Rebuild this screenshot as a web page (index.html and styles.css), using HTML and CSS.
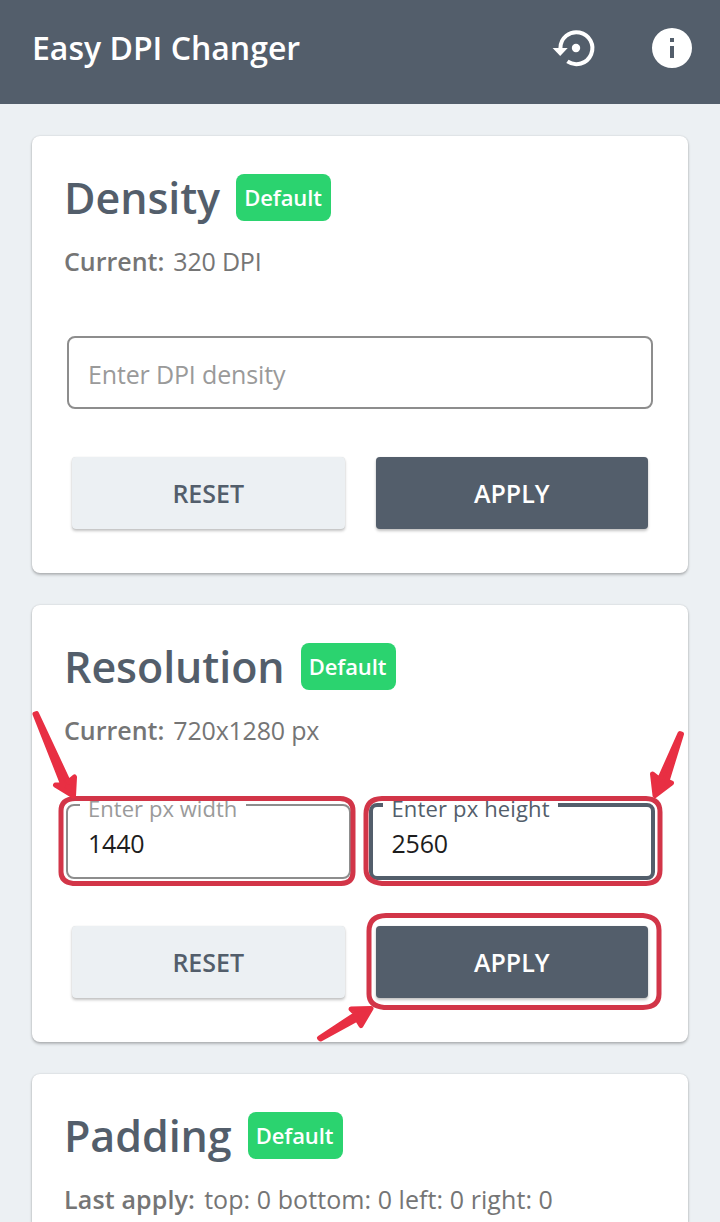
FILE: index.html
```html
<!DOCTYPE html>
<html lang="en">
<head>
<meta charset="utf-8">
<title>Easy DPI Changer</title>
<link rel="stylesheet" href="styles.css">
</head>
<body>
<header class="app-bar">
  <h1 class="app-title">Easy DPI Changer</h1>
  <svg class="icon" viewBox="0 0 48 48" aria-label="Restore">
    <path d="M10.4 24.2A16 16 0 1 1 17.4 37.4" fill="none" stroke="#fff" stroke-width="4"/>
    <path d="M2.6 24H17.7L10.2 32Z" fill="#fff"/>
    <circle cx="26" cy="24" r="4.2" fill="#fff"/>
  </svg>
  <svg class="icon" viewBox="0 0 48 48" aria-label="Info">
    <path d="M24 4a20 20 0 1 0 0 40a20 20 0 0 0 0-40zm2 30h-4V22h4zm0-16h-4v-4h4z" fill="#fff" fill-rule="evenodd"/>
  </svg>
</header>
<main class="content">
  <section class="card">
    <div class="heading"><h2 class="name">Density</h2><span class="badge">Default</span></div>
    <p class="status"><b class="key">Current:</b><span class="value">320 DPI</span></p>
    <div class="fields"><div class="field"><span class="placeholder">Enter DPI density</span></div></div>
    <div class="actions"><button class="btn">RESET</button><button class="btn primary">APPLY</button></div>
  </section>
  <section class="card">
    <div class="heading"><h2 class="name">Resolution</h2><span class="badge">Default</span></div>
    <p class="status"><b class="key">Current:</b><span class="value">720x1280 px</span></p>
    <div class="fields pair">
      <div class="field"><span class="label label-width">Enter px width</span><span class="entry">1440</span></div>
      <div class="field focused"><span class="label label-height">Enter px height</span><span class="entry">2560</span></div>
    </div>
    <div class="actions"><button class="btn">RESET</button><button class="btn primary">APPLY</button></div>
  </section>
  <section class="card last">
    <div class="heading"><h2 class="name">Padding</h2><span class="badge">Default</span></div>
    <p class="status wide"><b class="key">Last apply:</b><span class="value">top: 0 bottom: 0 left: 0 right: 0</span></p>
  </section>
</main>
<svg class="marks" viewBox="0 700 720 350" aria-hidden="true">
  <g fill="none" stroke="#d23548" stroke-width="5">
    <path d="M75 798.500H340Q353 799 353 811V872Q353 883 341 883.500H73Q61 882 61 872V811Q61 799 75 798.500Z"/>
    <path d="M382 798.500H646Q660 799 660 812V870Q660 883 646 883.500H382Q366 882 366 869V814Q366 799 382 798.500Z"/>
    <path d="M386 915.500H643Q659 917 659 930V994Q659 1007 643 1007.500H384Q369 1006 369 994V931Q369 916 386 915.500Z"/>
  </g>
  <g fill="#e82f43" stroke="#e82f43" stroke-width="5" stroke-linejoin="round">
    <path d="M35 714L36.500 713.500L68.500 782L74.500 777L73.500 796L55.500 785L63 785Z"/>
    <path d="M680 733.500L681.500 734L667 781L671.500 783L655 795.500L652.500 774L659.500 779.500Z"/>
    <path d="M319.500 1038L320.500 1039L357 1019L361 1025.500L371 1008.500L351 1009L356 1014Z"/>
  </g>
</svg>
</body>
</html>
```
FILE: styles.css
```css
* { box-sizing: border-box; }
html { overflow: hidden; }
body { margin: 0; height: 1222px; overflow: hidden; position: relative; background: #ecf0f3; font-family: "Open Sans", "Noto Sans", sans-serif; }
h1, h2, p { margin: 0; }
.app-bar { height: 104px; background: #535e6b; display: flex; align-items: center; gap: 50px; padding: 0 24px 8px 32px; }
.app-title { flex: 1; color: #fff; font-size: 32px; font-weight: 600; line-height: 44px; white-space: nowrap; }
.icon { width: 48px; height: 48px; flex: none; }
.content { display: flex; flex-direction: column; gap: 32px; padding: 32px 32px 0; }
.card { height: 437px; flex: none; padding: 38px 32px 0; background: #fff; border-radius: 8px; box-shadow: 0 2px 3px rgba(0,0,0,.24), 0 0 2px rgba(0,0,0,.16); }
.last { height: 148px; border-radius: 8px 8px 0 0; }
.heading { display: flex; align-items: center; gap: 16px; height: 47px; }
.name { color: #535e6b; font-size: 43px; font-weight: 600; letter-spacing: -.07px; line-height: 48px; white-space: nowrap; }
.badge { width: 95px; height: 47px; flex: none; border-radius: 8px; background: #2bd36f; color: #fff; font-size: 22px; font-weight: 600; letter-spacing: -.1px; line-height: 47px; padding-right: 1px; text-align: center; }
.status { display: flex; align-items: center; gap: 9px; height: 36px; margin-top: 22px; color: #757575; font-size: 25px; line-height: 36px; white-space: nowrap; }
.key { font-weight: 600; }
.value { letter-spacing: -.2px; }
.wide .key { letter-spacing: .15px; }
.wide .value { letter-spacing: .07px; }
.fields { height: 77px; margin-top: 55px; padding: 2px 3px; display: flex; }
.pair { padding: 0 1px 0 2px; gap: 18px; }
.field { position: relative; flex: 1; height: 73px; border: 2px solid #8d8d8d; border-radius: 8px; padding: 0 19px; font-size: 25px; line-height: 73px; white-space: nowrap; }
.pair .field { height: 75px; margin-top: 1px; padding: 0 20px; }
.pair .focused { height: 77px; margin-top: 0; border: 4px solid #535e6b; padding: 0 19px; }
.placeholder { color: #9a9a9a; letter-spacing: -.15px; }
.label { position: absolute; left: 12px; top: -13px; background: #fff; padding: 0 8px; font-size: 22px; line-height: 36px; height: 30px; display: flex; align-items: center; }
.label-width { width: 166px; color: #9a9a9a; letter-spacing: .05px; }
.label-height { left: 10px; top: -14px; width: 175px; padding-left: 9px; color: #535e6b; letter-spacing: .15px; }
.entry { display: block; line-height: 74px; color: #1d1d1d; letter-spacing: -.2px; }
.focused .entry { position: relative; top: -1px; }
.actions { display: flex; gap: 31px; margin-top: 46px; padding: 0 8px; height: 72px; }
.btn { flex: 1; border: 0; border-radius: 4px; background: #ecf0f3; color: #535e6b; font: 600 25px/36px "Open Sans", sans-serif; padding: 0; box-shadow: 0 2px 3px rgba(0,0,0,.24), 0 0 1px rgba(0,0,0,.15); }
.primary { background: #535e6b; color: #fff; }
.marks { position: absolute; left: 0; top: 700px; width: 720px; height: 350px; pointer-events: none; }
```
